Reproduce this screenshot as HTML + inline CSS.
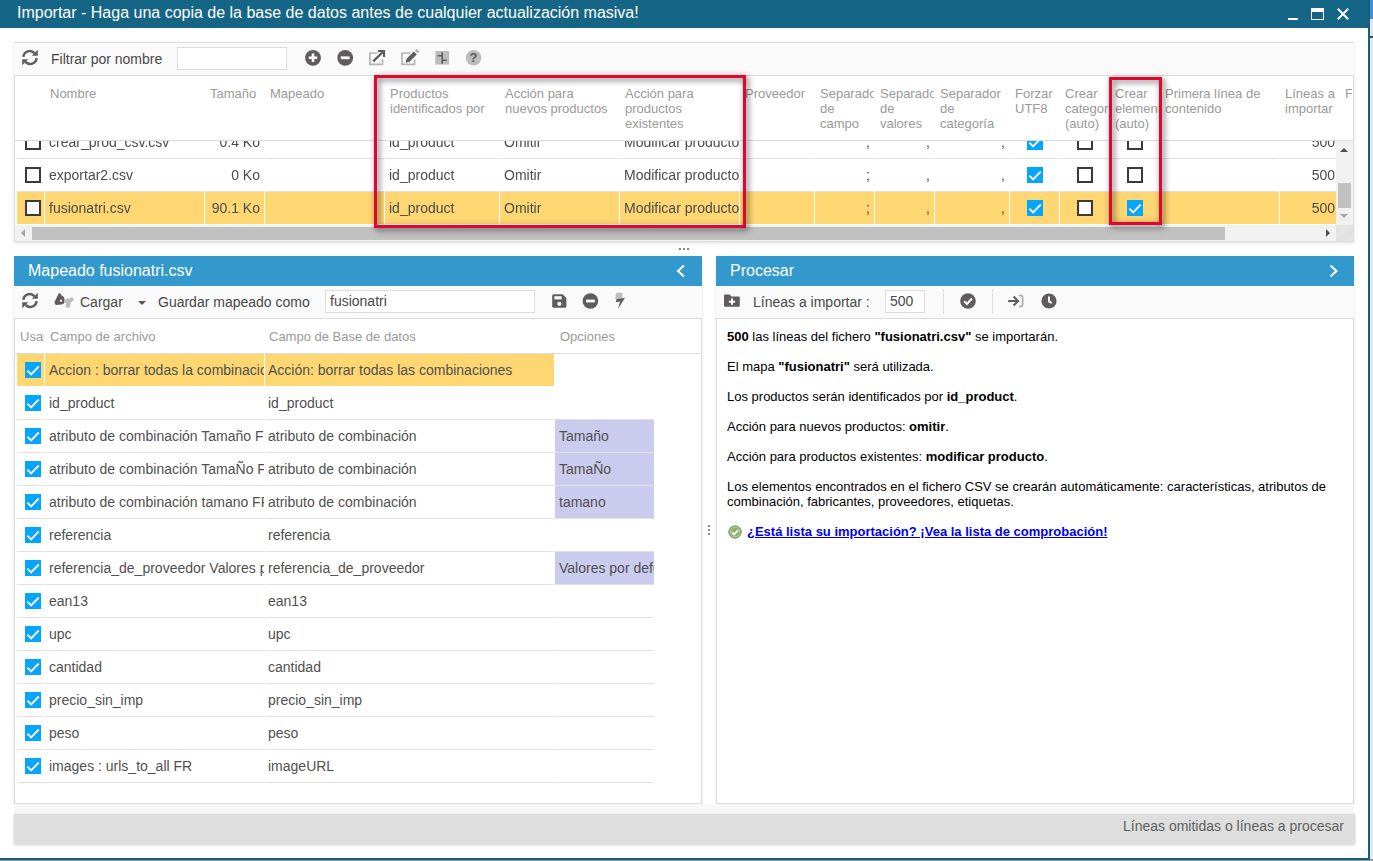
<!DOCTYPE html>
<html lang="es">
<head>
<meta charset="utf-8">
<title>Importar</title>
<style>
*{box-sizing:border-box;margin:0;padding:0}
html,body{width:1373px;height:861px;overflow:hidden}
body{position:relative;background:linear-gradient(#e4e6e8 0 859px,#8f9aa3 859px);font-family:"Liberation Sans",sans-serif;font-size:14px;color:#333}
.abs{position:absolute}
#win{position:absolute;left:0;top:0;width:1370px;height:860px;background:#fff;border-right:2px solid #15607f;border-bottom:2px solid #15607f;overflow:hidden}
#title{position:absolute;left:0;top:0;width:1370px;height:28px;background:#156586;color:#fff;font-size:16px;line-height:28px}
#title span{position:absolute;left:17px;top:-1px;white-space:nowrap}
.panel{position:absolute;background:#fff;border:1px solid #dedede;box-shadow:0 1px 3px rgba(0,0,0,.13)}
.tb{position:absolute;left:-1px;top:0;right:-1px;background:#fafafa;border-bottom:1px solid #dcdcdc}
.phead{position:absolute;left:-1px;top:-1px;right:-1px;height:30px;background:#3398cb;color:#fff;font-size:16px;line-height:29px}
.t{position:absolute;white-space:nowrap;line-height:16px}
.h{position:absolute;color:#9a9a9a;font-size:13px;line-height:15px;white-space:nowrap;overflow:hidden}
.row{position:absolute;left:0;height:33px}
.c{position:absolute;top:0;height:33px;line-height:32px;white-space:nowrap;overflow:hidden;border-left:1px solid #fff;box-shadow:inset 0 -1px 0 #e1e1e1;padding-left:4px;font-size:14px;color:#505050}
.sel .c,.c.s{background:#fed773;box-shadow:inset 0 -1px 0 #fff}
.c.lav{background:#cbcbee}
.r{text-align:right;padding-right:4px;padding-left:0}
.cb{position:absolute;width:16px;height:16px;border:2px solid #3a3a3a;background:#fff}
.cb.on{border:0;background:#04a6fc}
.cb.on:after{content:"";position:absolute;left:0;top:0;width:16px;height:16px;background:#fcf0fd;clip-path:polygon(3.07px 7.93px,6.1px 10.96px,13.13px 3.83px,14.47px 5.17px,6.1px 13.64px,1.73px 9.27px)}
input{font-family:inherit}
.inp{position:absolute;border:1px solid #dcdcdc;background:#fff;font-size:14px;color:#484848;padding-left:5px;white-space:nowrap}
#msg p{margin-bottom:15px}
#trows .c{color:#4c4c4c}
.redbox{position:absolute;border:3px solid #e2062e;filter:drop-shadow(2px 2px 3.2px rgba(0,0,0,.66))}
</style>
</head>
<body>
<div class="abs" style="left:1370px;top:0;width:3px;height:19px;background:#3f8fd9"></div>
<div class="abs" style="left:1370px;top:36px;width:3px;height:2px;background:#444"></div>
<div id="win">
  <div id="title"><span>Importar - Haga una copia de la base de datos antes de cualquier actualización masiva!</span>
    <div class="abs" style="left:1288px;top:18px;width:10px;height:2px;background:#fff"></div>
    <div class="abs" style="left:1311px;top:8px;width:13px;height:12px;border:1px solid #fff;border-top-width:4px"></div>
    <svg class="abs" style="left:1336px;top:7px" width="14" height="14" viewBox="0 0 14 14"><path d="M1.8 1.8 L12.2 12.2 M12.2 1.8 L1.8 12.2" stroke="#fff" stroke-width="2" fill="none"/></svg>
  </div>

  <!-- TOP PANEL -->
  <div class="panel" id="top" style="left:14px;top:42px;width:1340px;height:200px">
    <!-- toolbar -->
    <div class="tb" style="height:33px"></div>
    <svg class="abs" style="left:6px;top:6px" width="18" height="17" viewBox="0 0 18 17"><g fill="none" stroke="#605c5d" stroke-width="2.5"><path d="M2.4 7.8 A6.3 6.3 0 0 1 13.4 4.2"/><path d="M15.6 9.2 A6.3 6.3 0 0 1 4.6 12.8"/></g><path d="M16.8 0.8 V6.8 H10.8 Z M1.2 16.2 V10.2 H7.2 Z" fill="#605c5d"/></svg>
    <span class="t" style="left:36px;top:8px;font-size:14px;color:#484848">Filtrar por nombre</span>
    <div class="inp" style="left:162px;top:4px;width:110px;height:23px"></div>
    <!-- plus -->
    <svg class="abs" style="left:289px;top:6px" width="18" height="18" viewBox="0 0 18 18"><circle cx="9" cy="8.8" r="7.9" fill="#605c5d"/><path d="M9 4.6 V13 M4.8 8.8 H13.2" stroke="#fff" stroke-width="2.6"/></svg>
    <!-- minus -->
    <svg class="abs" style="left:321px;top:6px" width="18" height="18" viewBox="0 0 18 18"><circle cx="9.2" cy="8.8" r="7.9" fill="#605c5d"/><path d="M4.8 8.8 H13.6" stroke="#fff" stroke-width="2.8"/></svg>
    <!-- external link -->
    <svg class="abs" style="left:352px;top:5px" width="20" height="20" viewBox="0 0 20 20"><path d="M10.5 5 H2.9 V16.4 H15.5 V11" fill="none" stroke="#b5b5b5" stroke-width="1.7"/><path d="M6.2 13.4 L16.8 3" stroke="#605c5d" stroke-width="2.3"/><path d="M11 3 H17 V9" fill="none" stroke="#605c5d" stroke-width="2.2"/></svg>
    <!-- edit -->
    <svg class="abs" style="left:384px;top:5px" width="21" height="20" viewBox="0 0 21 20"><path d="M11.5 5 H3 V16.4 H15.6 V11.5" fill="none" stroke="#b5b5b5" stroke-width="1.7"/><path d="M6.6 14.8 L7.6 10.8 L14.8 3.6 L17.8 6.6 L10.6 13.8 Z" fill="#605c5d"/><path d="M15.8 2.6 L17.2 1.2 Q17.8 0.8 18.4 1.4 L20 3 Q20.5 3.6 20 4.2 L18.8 5.6 Z" fill="#b5b5b5"/></svg>
    <!-- tree/settings -->
    <svg class="abs" style="left:420px;top:7px" width="16" height="16" viewBox="0 0 16 16"><rect x="0.3" y="1" width="13.8" height="13.6" fill="#bdbdbd"/><path d="M7.2 2.2 V13.7 M2.6 5.8 H7.2 M7.2 10.2 H11.8" stroke="#605c5d" stroke-width="1.6" fill="none"/></svg>
    <!-- help -->
    <svg class="abs" style="left:450px;top:6px" width="18" height="18" viewBox="0 0 18 18"><circle cx="8.6" cy="8.7" r="7.7" fill="#bdbdbd"/><text x="8.6" y="13.4" text-anchor="middle" font-family="Liberation Sans, sans-serif" font-size="13" font-weight="bold" fill="#605c5d">?</text></svg>

    <!-- header -->
    <div class="abs" style="left:0;top:34px;width:1338px;height:64px;background:#fff;border-bottom:1px solid #dcdcdc"></div>
    <div class="h" style="left:35px;top:43px">Nombre</div>
    <div class="h" style="left:195px;top:43px">Tamaño</div>
    <div class="h" style="left:255px;top:43px">Mapeado</div>
    <div class="h" style="left:375px;top:43px">Productos<br>identificados por</div>
    <div class="h" style="left:490px;top:43px">Acción para<br>nuevos productos</div>
    <div class="h" style="left:610px;top:43px">Acción para<br>productos<br>existentes</div>
    <div class="h" style="left:730px;top:43px">Proveedor</div>
    <div class="h" style="left:805px;top:43px;width:54px">Separador<br>de<br>campo</div>
    <div class="h" style="left:865px;top:43px;width:54px">Separador<br>de<br>valores</div>
    <div class="h" style="left:925px;top:43px">Separador<br>de<br>categoría</div>
    <div class="h" style="left:1000px;top:43px">Forzar<br>UTF8</div>
    <div class="h" style="left:1050px;top:43px;width:44px">Crear<br>categorías<br>(auto)</div>
    <div class="h" style="left:1100px;top:43px;width:44px">Crear<br>elementos<br>(auto)</div>
    <div class="h" style="left:1150px;top:43px">Primera línea de<br>contenido</div>
    <div class="h" style="left:1270px;top:43px">Líneas a<br>importar</div>
    <div class="h" style="left:1330px;top:43px;width:7px">Fecha</div>

    <!-- rows -->
    <div class="abs" id="trows" style="left:0;top:98px;width:1321px;height:84px;overflow:hidden;will-change:transform">
      <div class="row " style="top:-15px;width:1321px">
        <div class="c" style="left:1px;width:28px"></div>
        <div class="c" style="left:29px;width:160px">crear_prod_csv.csv</div>
        <div class="c r" style="left:189px;width:60px">0.4 Ko</div>
        <div class="c" style="left:249px;width:120px"></div>
        <div class="c" style="left:369px;width:115px">id_product</div>
        <div class="c" style="left:484px;width:120px">Omitir</div>
        <div class="c" style="left:604px;width:120px">Modificar producto</div>
        <div class="c" style="left:724px;width:75px"></div>
        <div class="c r" style="left:799px;width:60px">,</div>
        <div class="c r" style="left:859px;width:60px">,</div>
        <div class="c r" style="left:919px;width:75px">,</div>
        <div class="c" style="left:994px;width:50px"></div>
        <div class="c" style="left:1044px;width:50px"></div>
        <div class="c" style="left:1094px;width:50px"></div>
        <div class="c" style="left:1144px;width:120px"></div>
        <div class="c r" style="left:1264px;width:60px">500</div>
        <div class="cb" style="left:10px;top:8px"></div>
        <div class="cb on" style="left:1012px;top:8px"></div>
        <div class="cb" style="left:1062px;top:8px"></div>
        <div class="cb" style="left:1112px;top:8px"></div>
      </div>
      <div class="row " style="top:18px;width:1321px">
        <div class="c" style="left:1px;width:28px"></div>
        <div class="c" style="left:29px;width:160px">exportar2.csv</div>
        <div class="c r" style="left:189px;width:60px">0 Ko</div>
        <div class="c" style="left:249px;width:120px"></div>
        <div class="c" style="left:369px;width:115px">id_product</div>
        <div class="c" style="left:484px;width:120px">Omitir</div>
        <div class="c" style="left:604px;width:120px">Modificar producto</div>
        <div class="c" style="left:724px;width:75px"></div>
        <div class="c r" style="left:799px;width:60px">;</div>
        <div class="c r" style="left:859px;width:60px">,</div>
        <div class="c r" style="left:919px;width:75px">,</div>
        <div class="c" style="left:994px;width:50px"></div>
        <div class="c" style="left:1044px;width:50px"></div>
        <div class="c" style="left:1094px;width:50px"></div>
        <div class="c" style="left:1144px;width:120px"></div>
        <div class="c r" style="left:1264px;width:60px">500</div>
        <div class="cb" style="left:10px;top:8px"></div>
        <div class="cb on" style="left:1012px;top:8px"></div>
        <div class="cb" style="left:1062px;top:8px"></div>
        <div class="cb" style="left:1112px;top:8px"></div>
      </div>
      <div class="row sel" style="top:51px;width:1321px">
        <div class="c" style="left:1px;width:28px"></div>
        <div class="c" style="left:29px;width:160px">fusionatri.csv</div>
        <div class="c r" style="left:189px;width:60px">90.1 Ko</div>
        <div class="c" style="left:249px;width:120px"></div>
        <div class="c" style="left:369px;width:115px">id_product</div>
        <div class="c" style="left:484px;width:120px">Omitir</div>
        <div class="c" style="left:604px;width:120px">Modificar producto</div>
        <div class="c" style="left:724px;width:75px"></div>
        <div class="c r" style="left:799px;width:60px">;</div>
        <div class="c r" style="left:859px;width:60px">,</div>
        <div class="c r" style="left:919px;width:75px">,</div>
        <div class="c" style="left:994px;width:50px"></div>
        <div class="c" style="left:1044px;width:50px"></div>
        <div class="c" style="left:1094px;width:50px"></div>
        <div class="c" style="left:1144px;width:120px"></div>
        <div class="c r" style="left:1264px;width:60px">500</div>
        <div class="cb" style="left:10px;top:8px"></div>
        <div class="cb on" style="left:1012px;top:8px"></div>
        <div class="cb" style="left:1062px;top:8px"></div>
        <div class="cb on" style="left:1112px;top:8px"></div>
      </div>
    </div>

    <!-- v scrollbar -->
    <div class="abs" style="left:1321px;top:98px;width:17px;height:84px;background:#f1f1f1"></div>
    <div class="abs" style="left:1325px;top:105px;border:4px solid transparent;border-top:0;border-bottom:4.5px solid #505050"></div>
    <div class="abs" style="left:1323px;top:140px;width:13px;height:25px;background:#c1c1c1"></div>
    <div class="abs" style="left:1325px;top:171px;border:4px solid transparent;border-bottom:0;border-top:4.5px solid #a3a3a3"></div>
    <!-- h scrollbar -->
    <div class="abs" style="left:0;top:182px;width:1338px;height:16px;background:#f1f1f1"></div>
    <div class="abs" style="left:6px;top:186px;border:4px solid transparent;border-left:0;border-right:4.5px solid #a3a3a3"></div>
    <div class="abs" style="left:17px;top:184px;width:1193px;height:13px;background:#c1c1c1"></div>
    <div class="abs" style="left:1311px;top:186px;border:4px solid transparent;border-right:0;border-left:4.5px solid #505050"></div>
    <div class="abs" style="left:1321px;top:182px;width:17px;height:16px;background:repeating-linear-gradient(135deg,#dfdfdf 0 1px,#e6e6e6 1px 2px)"></div>
  </div>

  <!-- LEFT PANEL -->
  <div class="panel" id="left" style="left:14px;top:256px;width:688px;height:548px">
    <div class="phead"><span class="abs" style="left:14px;top:0">Mapeado fusionatri.csv</span></div>
    <svg class="abs" style="left:655px;top:4px" width="20" height="20" viewBox="0 0 20 20"><path d="M14 4.5 L8 10 L14 15.5" fill="none" stroke="#fff" stroke-width="2"/></svg>
    <!-- toolbar -->
    <div class="tb" style="top:29px;height:33px"></div>
    <svg class="abs" style="left:6px;top:35px" width="18" height="17" viewBox="0 0 18 17"><g fill="none" stroke="#605c5d" stroke-width="2.5"><path d="M2.4 7.8 A6.3 6.3 0 0 1 13.4 4.2"/><path d="M15.6 9.2 A6.3 6.3 0 0 1 4.6 12.8"/></g><path d="M16.8 0.8 V6.8 H10.8 Z M1.2 16.2 V10.2 H7.2 Z" fill="#605c5d"/></svg>
    <svg class="abs" style="left:38px;top:35px" width="22" height="18" viewBox="0 0 22 18"><path d="M1.4 10.2 L5.8 1.2 L7.4 1.2 L8.6 3.4 L10.4 4.6 L11.4 6.6 L11.4 11 L9 12.6 L2.6 13 Z" fill="#605c5d"/><circle cx="8" cy="8.8" r="1.2" fill="#e8e8f0"/><path d="M11.3 8 L14 6.6 L16.6 6.6 L18.6 5.2 L20.2 6 L20.9 8 L19 9.6 L17.6 11.2 L17 14 L16.2 15.9 L14 15.6 L12.1 15 L13.2 13 L12 12.4 L13.6 11.4 L11.6 10.4 Z" fill="#bdbdbd"/></svg>
    <span class="t" style="left:65px;top:37px;font-size:14px;color:#484848">Cargar</span>
    <div class="abs" style="left:123px;top:44px;border:4px solid transparent;border-bottom:0;border-top:4px solid #555"></div>
    <span class="t" style="left:143px;top:37px;font-size:14px;color:#484848">Guardar mapeado como</span>
    <div class="inp" style="left:310px;top:33px;width:210px;height:23px;line-height:21px;padding-left:4px">fusionatri</div>
    <!-- save -->
    <svg class="abs" style="left:536px;top:36px" width="17" height="16" viewBox="0 0 17 16"><path d="M1.2 2.8 Q1.2 1.2 2.8 1.2 H11.6 L15.4 5 V13.2 Q15.4 14.8 13.8 14.8 H2.8 Q1.2 14.8 1.2 13.2 Z" fill="#605c5d"/><rect x="3.4" y="3.2" width="7.2" height="3.2" fill="#fafafa"/><circle cx="8.3" cy="10.8" r="2.1" fill="#fafafa"/></svg>
    <svg class="abs" style="left:566px;top:35px" width="18" height="18" viewBox="0 0 18 18"><circle cx="9.4" cy="9" r="7.8" fill="#605c5d"/><path d="M5 9 H13.8" stroke="#fff" stroke-width="2.8"/></svg>
    <!-- bolt -->
    <svg class="abs" style="left:597px;top:35px" width="16" height="18" viewBox="0 0 16 18"><path d="M4.2 0.8 H10.6 L9.6 7 H3.2 Z" fill="#bdbdbd"/><path d="M4.4 7.2 L13 5.8 L6 17 L8 9.6 L3.8 10.2 Z" fill="#605c5d"/></svg>

    <!-- header -->
    <div class="abs" style="left:0;top:62px;width:686px;height:35px;border-bottom:1px solid #dcdcdc"></div>
    <div class="h" style="left:5px;top:72px;width:24px">Usar</div>
    <div class="h" style="left:35px;top:72px">Campo de archivo</div>
    <div class="h" style="left:254px;top:72px">Campo de Base de datos</div>
    <div class="h" style="left:545px;top:72px">Opciones</div>
    <!-- rows -->
    <div class="abs" style="left:0;top:97px;width:640px;height:440px;overflow:hidden">
      <div class="row" style="top:0px;width:639px">
        <div class="c s" style="left:1px;width:28px"></div>
        <div class="c s" style="left:29px;width:220px">Accion : borrar todas la combinaciones</div>
        <div class="c s" style="left:249px;width:290px;padding-left:3px">Acción: borrar todas las combinaciones</div>
        <div class="c" style="left:539px;width:100px;box-shadow:none"></div>
        <div class="cb on" style="left:10px;top:8px"></div>
      </div>
      <div class="row" style="top:33px;width:639px">
        <div class="c" style="left:1px;width:28px"></div>
        <div class="c" style="left:29px;width:220px">id_product</div>
        <div class="c" style="left:249px;width:290px;padding-left:3px">id_product</div>
        <div class="c" style="left:539px;width:100px"></div>
        <div class="cb on" style="left:10px;top:8px"></div>
      </div>
      <div class="row" style="top:66px;width:639px">
        <div class="c" style="left:1px;width:28px"></div>
        <div class="c" style="left:29px;width:220px">atributo de combinación Tamaño FR</div>
        <div class="c" style="left:249px;width:290px;padding-left:3px">atributo de combinación</div>
        <div class="c lav" style="left:539px;width:100px">Tamaño</div>
        <div class="cb on" style="left:10px;top:8px"></div>
      </div>
      <div class="row" style="top:99px;width:639px">
        <div class="c" style="left:1px;width:28px"></div>
        <div class="c" style="left:29px;width:220px">atributo de combinación TamaÑo FR</div>
        <div class="c" style="left:249px;width:290px;padding-left:3px">atributo de combinación</div>
        <div class="c lav" style="left:539px;width:100px">TamaÑo</div>
        <div class="cb on" style="left:10px;top:8px"></div>
      </div>
      <div class="row" style="top:132px;width:639px">
        <div class="c" style="left:1px;width:28px"></div>
        <div class="c" style="left:29px;width:220px">atributo de combinación tamano FR</div>
        <div class="c" style="left:249px;width:290px;padding-left:3px">atributo de combinación</div>
        <div class="c lav" style="left:539px;width:100px">tamano</div>
        <div class="cb on" style="left:10px;top:8px"></div>
      </div>
      <div class="row" style="top:165px;width:639px">
        <div class="c" style="left:1px;width:28px"></div>
        <div class="c" style="left:29px;width:220px">referencia</div>
        <div class="c" style="left:249px;width:290px;padding-left:3px">referencia</div>
        <div class="c" style="left:539px;width:100px"></div>
        <div class="cb on" style="left:10px;top:8px"></div>
      </div>
      <div class="row" style="top:198px;width:639px">
        <div class="c" style="left:1px;width:28px"></div>
        <div class="c" style="left:29px;width:220px">referencia_de_proveedor Valores por defecto</div>
        <div class="c" style="left:249px;width:290px;padding-left:3px">referencia_de_proveedor</div>
        <div class="c lav" style="left:539px;width:100px">Valores por defecto</div>
        <div class="cb on" style="left:10px;top:8px"></div>
      </div>
      <div class="row" style="top:231px;width:639px">
        <div class="c" style="left:1px;width:28px"></div>
        <div class="c" style="left:29px;width:220px">ean13</div>
        <div class="c" style="left:249px;width:290px;padding-left:3px">ean13</div>
        <div class="c" style="left:539px;width:100px"></div>
        <div class="cb on" style="left:10px;top:8px"></div>
      </div>
      <div class="row" style="top:264px;width:639px">
        <div class="c" style="left:1px;width:28px"></div>
        <div class="c" style="left:29px;width:220px">upc</div>
        <div class="c" style="left:249px;width:290px;padding-left:3px">upc</div>
        <div class="c" style="left:539px;width:100px"></div>
        <div class="cb on" style="left:10px;top:8px"></div>
      </div>
      <div class="row" style="top:297px;width:639px">
        <div class="c" style="left:1px;width:28px"></div>
        <div class="c" style="left:29px;width:220px">cantidad</div>
        <div class="c" style="left:249px;width:290px;padding-left:3px">cantidad</div>
        <div class="c" style="left:539px;width:100px"></div>
        <div class="cb on" style="left:10px;top:8px"></div>
      </div>
      <div class="row" style="top:330px;width:639px">
        <div class="c" style="left:1px;width:28px"></div>
        <div class="c" style="left:29px;width:220px">precio_sin_imp</div>
        <div class="c" style="left:249px;width:290px;padding-left:3px">precio_sin_imp</div>
        <div class="c" style="left:539px;width:100px"></div>
        <div class="cb on" style="left:10px;top:8px"></div>
      </div>
      <div class="row" style="top:363px;width:639px">
        <div class="c" style="left:1px;width:28px"></div>
        <div class="c" style="left:29px;width:220px">peso</div>
        <div class="c" style="left:249px;width:290px;padding-left:3px">peso</div>
        <div class="c" style="left:539px;width:100px"></div>
        <div class="cb on" style="left:10px;top:8px"></div>
      </div>
      <div class="row" style="top:396px;width:639px">
        <div class="c" style="left:1px;width:28px"></div>
        <div class="c" style="left:29px;width:220px">images : urls_to_all FR</div>
        <div class="c" style="left:249px;width:290px;padding-left:3px">imageURL</div>
        <div class="c" style="left:539px;width:100px"></div>
        <div class="cb on" style="left:10px;top:8px"></div>
      </div>
    </div>
  </div>

  <!-- RIGHT PANEL -->
  <div class="panel" id="right" style="left:716px;top:256px;width:638px;height:548px">
    <div class="phead"><span class="abs" style="left:14px;top:0">Procesar</span></div>
    <svg class="abs" style="left:606px;top:4px" width="20" height="20" viewBox="0 0 20 20"><path d="M7.5 4.5 L13.5 10 L7.5 15.5" fill="none" stroke="#fff" stroke-width="2"/></svg>
    <div class="tb" style="top:29px;height:33px"></div>
    <!-- folder plus -->
    <svg class="abs" style="left:6px;top:36px" width="18" height="16" viewBox="0 0 18 16"><path d="M1 2.8 Q1 1.6 2.2 1.6 H6.8 L8.4 3.4 H15.6 Q16.8 3.4 16.8 4.6 V12.6 Q16.8 13.8 15.6 13.8 H2.2 Q1 13.8 1 12.6 Z" fill="#605c5d"/><path d="M9 5.6 V11.8 M5.9 8.7 H12.1" stroke="#fafafa" stroke-width="2"/></svg>
    <span class="t" style="left:36px;top:37px;font-size:14px;color:#484848">Líneas a importar :</span>
    <div class="inp" style="left:168px;top:33px;width:40px;height:23px;line-height:21px;padding-left:4px">500</div>
    <div class="abs" style="left:226px;top:32px;width:1px;height:25px;background:#dcdcdc"></div>
    <!-- check circle -->
    <svg class="abs" style="left:242px;top:35px" width="18" height="18" viewBox="0 0 18 18"><circle cx="9" cy="9" r="7.8" fill="#605c5d"/><path d="M5.2 9.2 L8 11.9 L12.9 6.6" stroke="#fafafa" stroke-width="2.2" fill="none"/></svg>
    <div class="abs" style="left:275px;top:32px;width:1px;height:25px;background:#dcdcdc"></div>
    <!-- sign-in -->
    <svg class="abs" style="left:290px;top:36px" width="18" height="16" viewBox="0 0 18 16"><path d="M1.2 8 H10.8 M6.6 3.6 L11 8 L6.6 12.4" stroke="#605c5d" stroke-width="2.1" fill="none"/><path d="M12 2.6 H14.2 Q15.6 2.6 15.6 4 V12 Q15.6 13.4 14.2 13.4 H12" stroke="#aaa" stroke-width="1.6" fill="none"/></svg>
    <!-- clock -->
    <svg class="abs" style="left:323px;top:35px" width="18" height="18" viewBox="0 0 18 18"><circle cx="9" cy="9" r="7.6" fill="#605c5d"/><path d="M9 4.4 V9.4 L11.8 11.2" stroke="#fafafa" stroke-width="2" fill="none"/></svg>

    <div class="abs" id="msg" style="left:10px;top:72px;width:612px;font-family:'Liberation Sans',sans-serif;font-size:13px;line-height:15px;color:#000">
      <p><b>500</b> las líneas del fichero <b>"fusionatri.csv"</b> se importarán.</p>
      <p>El mapa <b>"fusionatri"</b> será utilizada.</p>
      <p>Los productos serán identificados por <b>id_product</b>.</p>
      <p>Acción para nuevos productos: <b>omitir</b>.</p>
      <p>Acción para productos existentes: <b>modificar producto</b>.</p>
      <p>Los elementos encontrados en el fichero CSV se crearán automáticamente: características, atributos de combinación, fabricantes, proveedores, etiquetas.</p>
      <p style="padding-left:20px;position:relative"><svg class="abs" style="left:1px;top:1px" width="14" height="14" viewBox="0 0 14 14"><circle cx="7" cy="7" r="6.2" fill="#86b466" stroke="#6f9a55" stroke-width="1"/><circle cx="7" cy="7" r="4.9" fill="none" stroke="#c4cdbd" stroke-width="0.9"/><path d="M4 7.2 L6.2 9.4 L10.2 5" stroke="#fff" stroke-width="1.8" fill="none"/></svg><a style="color:#0000ee;font-weight:bold;text-decoration:underline">¿Está lista su importación? ¡Vea la lista de comprobación!</a></p>
    </div>
  </div>

  <!-- splitter dots -->
  <div class="abs" style="left:679px;top:248px;width:2px;height:2px;background:#888;box-shadow:4px 0 0 #888,8px 0 0 #888"></div>
  <div class="abs" style="left:708px;top:525px;width:2px;height:2px;background:#888;box-shadow:0 4px 0 #888,0 8px 0 #888"></div>
  <!-- annotation boxes -->
  <div class="redbox" style="left:374px;top:75px;width:372px;height:153px"></div>
  <div class="redbox" style="left:1109px;top:77px;width:53px;height:148px"></div>

  <div class="abs" style="left:14px;top:804px;width:1340px;height:10px;background:#f8f8f8"></div>
  <!-- STATUS BAR -->
  <div class="abs" style="left:14px;top:814px;width:1341px;height:30px;background:#dedede;box-shadow:0 1px 3px rgba(0,0,0,.2);color:#5e5e5e;font-size:14px;line-height:24px;text-align:right;padding-right:11px">Líneas omitidas o líneas a procesar</div>
</div>
</body>
</html>
